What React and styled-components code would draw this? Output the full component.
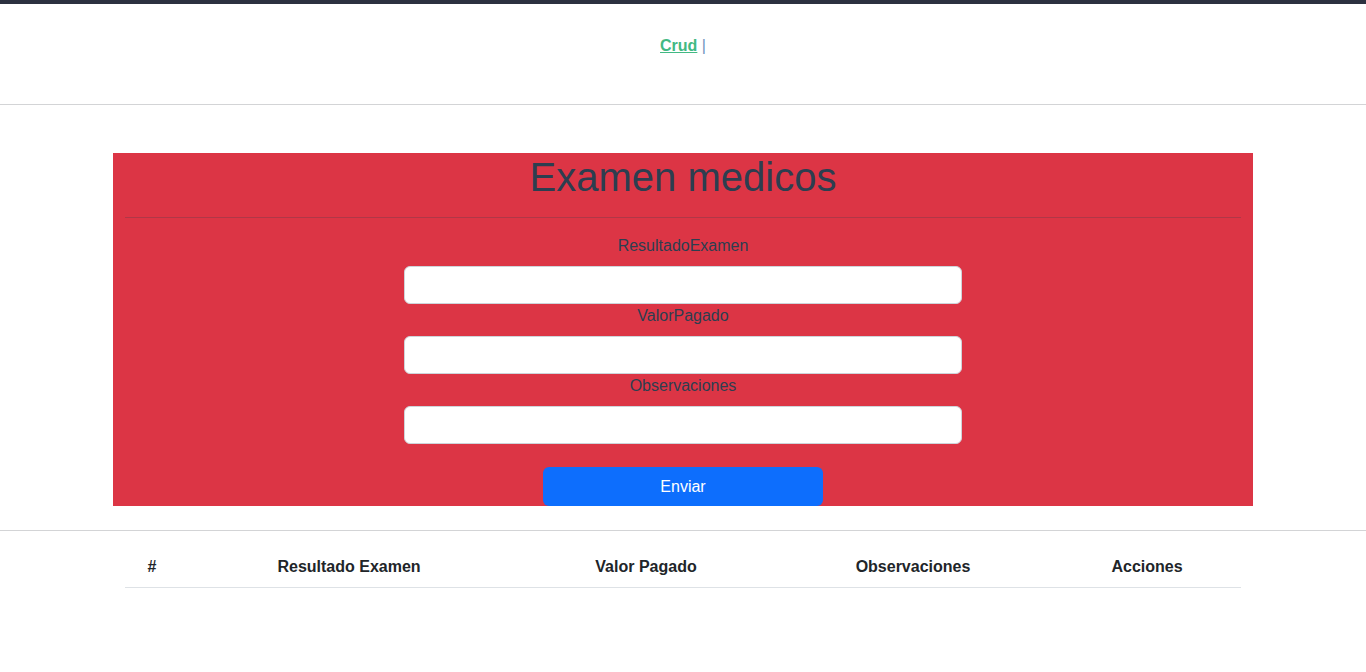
import React from "react";
import styled, { createGlobalStyle } from "styled-components";

const Global = createGlobalStyle`
  html, body { margin: 0; padding: 0; background: #fff; }
  body {
    font-family: "Liberation Sans", Arial, Helvetica, sans-serif;
    font-size: 16px;
    line-height: 1.5;
    color: #2c3e50;
    -webkit-font-smoothing: antialiased;
  }
  * { box-sizing: border-box; }
`;

const TopBar = styled.div`
  height: 4px;
  background: #2c3140;
`;

const Nav = styled.nav`
  padding: 30px;
  text-align: center;
  font-weight: 700;
  line-height: 24px;
`;

const NavLink = styled.a`
  color: #42b983;
  text-decoration: underline;
`;

const Separator = styled.span`
  font-weight: 400;
  color: #6f95bd;
`;

const Rule = styled.hr`
  margin: ${(p) => p.$m || "16px 0"};
  border: 0;
  border-top: 1px solid #d3d4d6;
  height: 0;
`;

const Panel = styled.section`
  width: 1140px;
  margin: 48px auto 0;
  background: #dc3545;
  padding: 0 12px;
  display: flex;
  flex-direction: column;
  align-items: center;
`;

const Title = styled.h1`
  margin: 0 0 8px;
  font-size: 40px;
  font-weight: 400;
  line-height: 48px;
  color: #2c3e50;
`;

const InnerRule = styled.hr`
  align-self: stretch;
  margin: 8px 0 16px;
  border: 0;
  border-top: 1px solid rgba(44, 62, 80, 0.25);
`;

const Field = styled.div`
  width: 558px;
  display: flex;
  flex-direction: column;
  align-items: center;
`;

const Label = styled.label`
  line-height: 24px;
  margin-bottom: 8px;
  color: #2c3e50;
`;

const Input = styled.input`
  width: 100%;
  height: 38px;
  border: 1px solid #ced4da;
  border-radius: 6px;
  background: #fff;
  padding: 6px 12px;
  font: inherit;
`;

const Button = styled.button`
  margin-top: 23px;
  width: 280px;
  height: 39px;
  border: 0;
  border-radius: 6px;
  background: #0d6efd;
  color: #fff;
  font: inherit;
  line-height: 24px;
  cursor: pointer;
`;

const Table = styled.div`
  width: 1116px;
  margin: 0 auto;
  display: grid;
  grid-template-columns: 54px 340px 254px 280px 188px;
  border-bottom: 1px solid #dee2e6;
`;

const Th = styled.div`
  padding: 8px;
  text-align: center;
  font-weight: 700;
  color: #212529;
  line-height: 24px;
`;

const fields = ["ResultadoExamen", "ValorPagado", "Observaciones"];
const cols = ["#", "Resultado Examen", "Valor Pagado", "Observaciones", "Acciones"];

export default function App() {
  return (
    <>
      <Global />
      <TopBar />
      <Nav>
        <NavLink href="#">Crud</NavLink> <Separator>|</Separator>
      </Nav>
      <Rule $m="16px 0 16px" />
      <Panel>
        <Title>Examen medicos</Title>
        <InnerRule />
        {fields.map((f) => (
          <Field key={f}>
            <Label>{f}</Label>
            <Input type="text" />
          </Field>
        ))}
        <Button>Enviar</Button>
      </Panel>
      <Rule $m="24px 0 16px" />
      <Table>
        {cols.map((c) => (
          <Th key={c}>{c}</Th>
        ))}
      </Table>
    </>
  );
}
